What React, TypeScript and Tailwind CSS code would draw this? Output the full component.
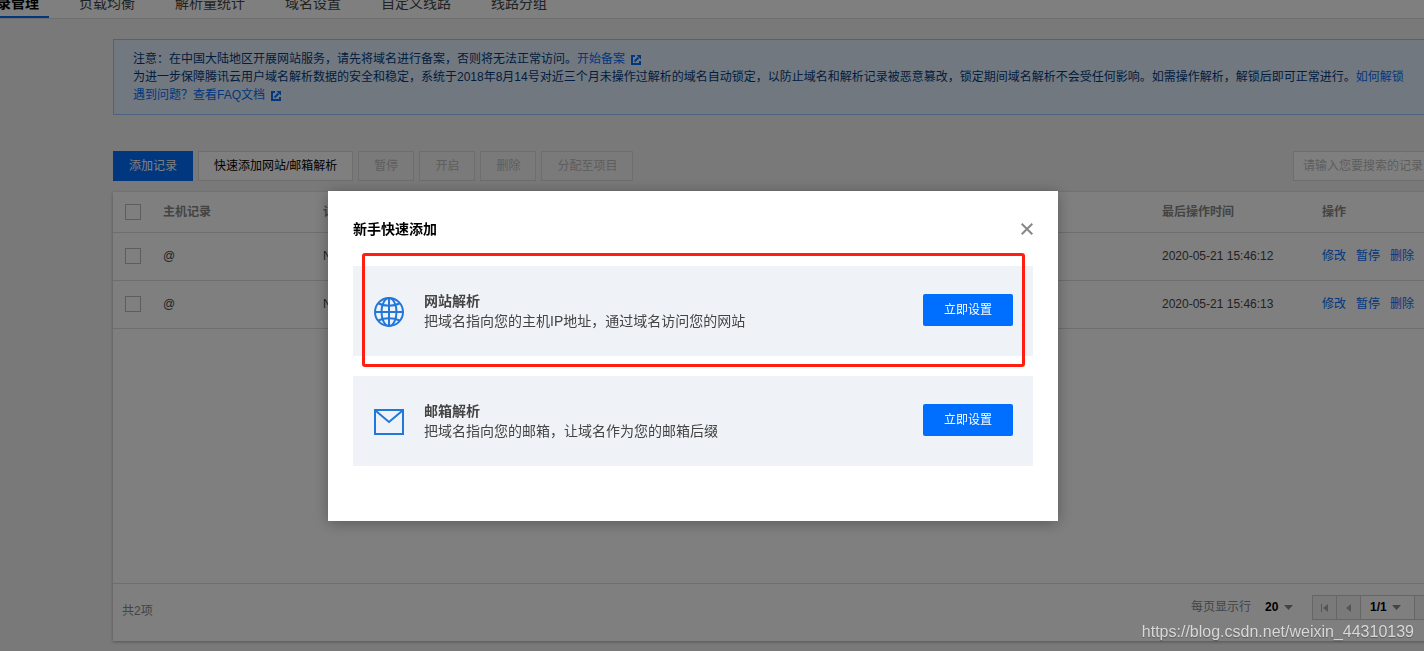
import type { ReactNode } from "react";

const tabs = [
  "记录管理",
  "负载均衡",
  "解析量统计",
  "域名设置",
  "自定义线路",
  "线路分组",
];

const records = [
  { id: 1, host: "@", type: "NS", time: "2020-05-21 15:46:12" },
  { id: 2, host: "@", type: "NS", time: "2020-05-21 15:46:13" },
];

const ExternalIcon = () => (
  <svg
    className="ml-1.5 inline-block align-[-2px]"
    width="10"
    height="10"
    viewBox="0 0 10 10"
    fill="none"
    stroke="currentColor"
    strokeWidth="2"
  >
    <path d="M4 1H1V9H9V6" />
    <path d="M3.5 6.5L7.5 2.5" strokeWidth="1.8" />
    <path d="M5.5 0H10V4.5Z" fill="currentColor" stroke="none" />
  </svg>
);

const Caret = () => (
  <svg
    className="pointer-events-none -ml-2"
    width="9"
    height="5"
    viewBox="0 0 9 5"
    fill="#888"
  >
    <path d="M0 0H9L4.5 5Z" />
  </svg>
);

const GlobeIcon = () => (
  <svg
    width="32"
    height="32"
    viewBox="0 0 32 32"
    fill="none"
    stroke="#2277da"
    strokeWidth="2"
  >
    <circle cx="16" cy="17" r="14" />
    <ellipse cx="16" cy="17" rx="7.5" ry="14" />
    <path d="M16 3V31M2 17H30" />
    <path d="M5.5 8.5C11 11.5 21 11.5 26.5 8.5M5.5 25.5C11 22.5 21 22.5 26.5 25.5" />
  </svg>
);

const MailIcon = () => (
  <svg
    width="32"
    height="32"
    viewBox="0 0 32 32"
    fill="none"
    stroke="#2277da"
    strokeWidth="2"
  >
    <path d="M2 5H30V29H2Z" />
    <path d="M3 6L16 17L29 6" />
  </svg>
);

const Checkbox = ({ label }: { label: string }) => (
  <input
    type="checkbox"
    aria-label={label}
    className="block h-4 w-4 appearance-none border border-[#bbb] bg-white"
  />
);

const QuickCard = ({
  icon,
  title,
  desc,
}: {
  icon: ReactNode;
  title: string;
  desc: string;
}) => (
  <div className="flex h-[90px] items-center bg-[#eff3f7] px-5">
    {icon}
    <div className="ml-[19px] flex-1 text-sm leading-5 text-[#444]">
      <h3 className="font-bold">{title}</h3>
      <p>{desc}</p>
    </div>
    <button className="mb-0.5 h-8 rounded-xs bg-[#006eff] px-[21px] text-white">
      立即设置
    </button>
  </div>
);

const Notice = () => (
  <div className="border border-[#97c7ff] bg-[#e5f0ff] px-[19px] py-2.5 leading-[18px] whitespace-nowrap text-[#003b80]">
    <p>
      注意：在中国大陆地区开展网站服务，请先将域名进行备案，否则将无法正常访问。
      <a href="#" className="text-[#006eff]">
        开始备案
        <ExternalIcon />
      </a>
    </p>
    <p>
      为进一步保障腾讯云用户域名解析数据的安全和稳定，系统于2018年8月14号对近三个月未操作过解析的域名自动锁定，以防止域名和解析记录被恶意篡改，锁定期间域名解析不会受任何影响。如需操作解析，解锁后即可正常进行。
      <a href="#" className="text-[#006eff]">
        如何解锁
      </a>
    </p>
    <p>
      <a href="#" className="text-[#006eff]">
        遇到问题？查看FAQ文档
        <ExternalIcon />
      </a>
    </p>
  </div>
);

const Toolbar = () => (
  <div className="mt-9 flex h-[30px] gap-[5px]">
    <button className="bg-[#006eff] px-4 text-white">添加记录</button>
    <button className="border border-[#ddd] bg-white px-[15px] text-black">
      快速添加网站/邮箱解析
    </button>
    {["暂停", "开启", "删除", "分配至项目"].map((label) => (
      <button
        key={label}
        disabled
        className="border border-[#ddd] bg-[#f5f5f5] px-[15px] text-[#bbb]"
      >
        {label}
      </button>
    ))}
    <input
      type="text"
      aria-label="搜索记录"
      placeholder="请输入您要搜索的记录"
      className="ml-auto w-[189px] border border-[#ddd] bg-white px-[9px] placeholder:text-[#bbb]"
    />
  </div>
);

const RecordTable = () => (
  <table className="w-full table-fixed text-left">
    <thead>
      <tr className="h-10 border-b border-[#ddd] text-[#888]">
        <th className="w-10 pl-3">
          <Checkbox label="全选" />
        </th>
        <th className="w-40 px-2.5">主机记录</th>
        <th className="px-2.5">记录类型</th>
        <th className="w-40 px-2.5">最后操作时间</th>
        <th className="w-[170px] px-2.5">操作</th>
      </tr>
    </thead>
    <tbody>
      {records.map((record) => (
        <tr key={record.id} className="h-12 border-b border-[#ddd] text-[#444]">
          <td className="pl-3">
            <Checkbox label={record.host} />
          </td>
          <td className="px-2.5">{record.host}</td>
          <td className="px-2.5">{record.type}</td>
          <td className="px-2.5">{record.time}</td>
          <td className="px-2.5">
            <div className="flex gap-2.5 text-[#006eff]">
              <a href="#">修改</a>
              <a href="#">暂停</a>
              <a href="#">删除</a>
            </div>
          </td>
        </tr>
      ))}
    </tbody>
  </table>
);

const Pagination = () => (
  <div className="flex items-start justify-between border-t border-[#ddd] pt-[11px] pr-[18px] pb-[17px] pl-[9px] leading-[25px] text-[#888]">
    <p className="mt-1">共2项</p>
    <div className="flex">
      <label className="mr-[19px] flex items-center">
        每页显示行
        <select className="ml-3.5 w-[27px] appearance-none font-bold text-black">
          <option>20</option>
        </select>
        <Caret />
      </label>
      <div className="flex h-[25px] border border-[#ccc]">
        <button
          aria-label="首页"
          className="flex w-6 items-center justify-center border-r border-[#ccc] bg-[#f5f5f5]"
        >
          <svg width="7" height="8" viewBox="0 0 7 8" fill="#aaa">
            <path d="M0 0H1V8H0ZM7 0V8L2 4Z" />
          </svg>
        </button>
        <button
          aria-label="上一页"
          className="flex w-6 items-center justify-center border-r border-[#ccc] bg-[#f5f5f5]"
        >
          <svg width="5" height="8" viewBox="0 0 5 8" fill="#aaa">
            <path d="M5 0V8L0 4Z" />
          </svg>
        </button>
        <div className="flex w-[54px] items-center border-r border-[#ccc] pl-[9px]">
          <select
            aria-label="页码"
            className="w-[30px] appearance-none font-bold text-black"
          >
            <option>1/1</option>
          </select>
          <Caret />
        </div>
        <button aria-label="下一页" className="w-6 border-r border-[#ccc] bg-[#f5f5f5]" />
        <button aria-label="末页" className="w-6 bg-[#f5f5f5]" />
      </div>
    </div>
  </div>
);

const QuickAddDialog = () => (
  <div className="fixed inset-0 flex items-start justify-center bg-black/50 pt-[191px] pr-[38px]">
    <div
      role="dialog"
      aria-labelledby="quick-add-title"
      className="w-[730px] bg-white px-[25px] pb-[55px] shadow-[0_2px_14px_rgba(0,0,0,0.3)]"
    >
      <div className="flex h-[75px] items-center justify-between">
        <h2 id="quick-add-title" className="text-sm font-bold text-black">
          新手快速添加
        </h2>
        <button aria-label="关闭">
          <svg
            width="12"
            height="12"
            viewBox="0 0 12 12"
            stroke="#888"
            strokeWidth="2"
          >
            <path d="M0.7 0.7L11.3 11.3M11.3 0.7L0.7 11.3" />
          </svg>
        </button>
      </div>
      <div className="relative">
        <QuickCard
          icon={<GlobeIcon />}
          title="网站解析"
          desc="把域名指向您的主机IP地址，通过域名访问您的网站"
        />
        <div className="pointer-events-none absolute -top-[13px] right-2 -bottom-[11px] left-[9px] rounded-[3px] border-3 border-[#ff1e10]" />
      </div>
      <div className="mt-5">
        <QuickCard
          icon={<MailIcon />}
          title="邮箱解析"
          desc="把域名指向您的邮箱，让域名作为您的邮箱后缀"
        />
      </div>
    </div>
  </div>
);

export default function App() {
  return (
    <div className="min-h-screen overflow-hidden bg-[#f2f2f2] font-['Liberation_Sans','Noto_Sans_CJK_SC',sans-serif] text-xs">
      <nav className="border-b border-[#ddd] bg-white">
        <div className="-mt-[7px] -ml-[27px] flex gap-5 text-sm leading-5 whitespace-nowrap">
          {tabs.map((tab, i) => (
            <a
              key={tab}
              href="#"
              className={
                i === 0
                  ? "border-b-2 border-[#006eff] px-2.5 pb-[3px] font-bold text-black"
                  : "px-2.5 pb-[3px] text-[#444]"
              }
            >
              {tab}
            </a>
          ))}
        </div>
      </nav>
      {/* the content area runs past the right edge of the window */}
      <main className="mt-5 -mr-[58px] ml-[113px]">
        <Notice />
        <Toolbar />
        <div className="mt-[11px] bg-white shadow-[0_1px_3px_rgba(0,0,0,0.3)]">
          <div className="min-h-[391px]">
            <RecordTable />
          </div>
          <Pagination />
        </div>
      </main>
      <QuickAddDialog />
      <p className="fixed right-2.5 bottom-[7px] text-base leading-6 text-[#d8d8d8] [text-shadow:0_1px_1px_rgba(0,0,0,0.3)]">
        https://blog.csdn.net/weixin_44310139
      </p>
    </div>
  );
}
